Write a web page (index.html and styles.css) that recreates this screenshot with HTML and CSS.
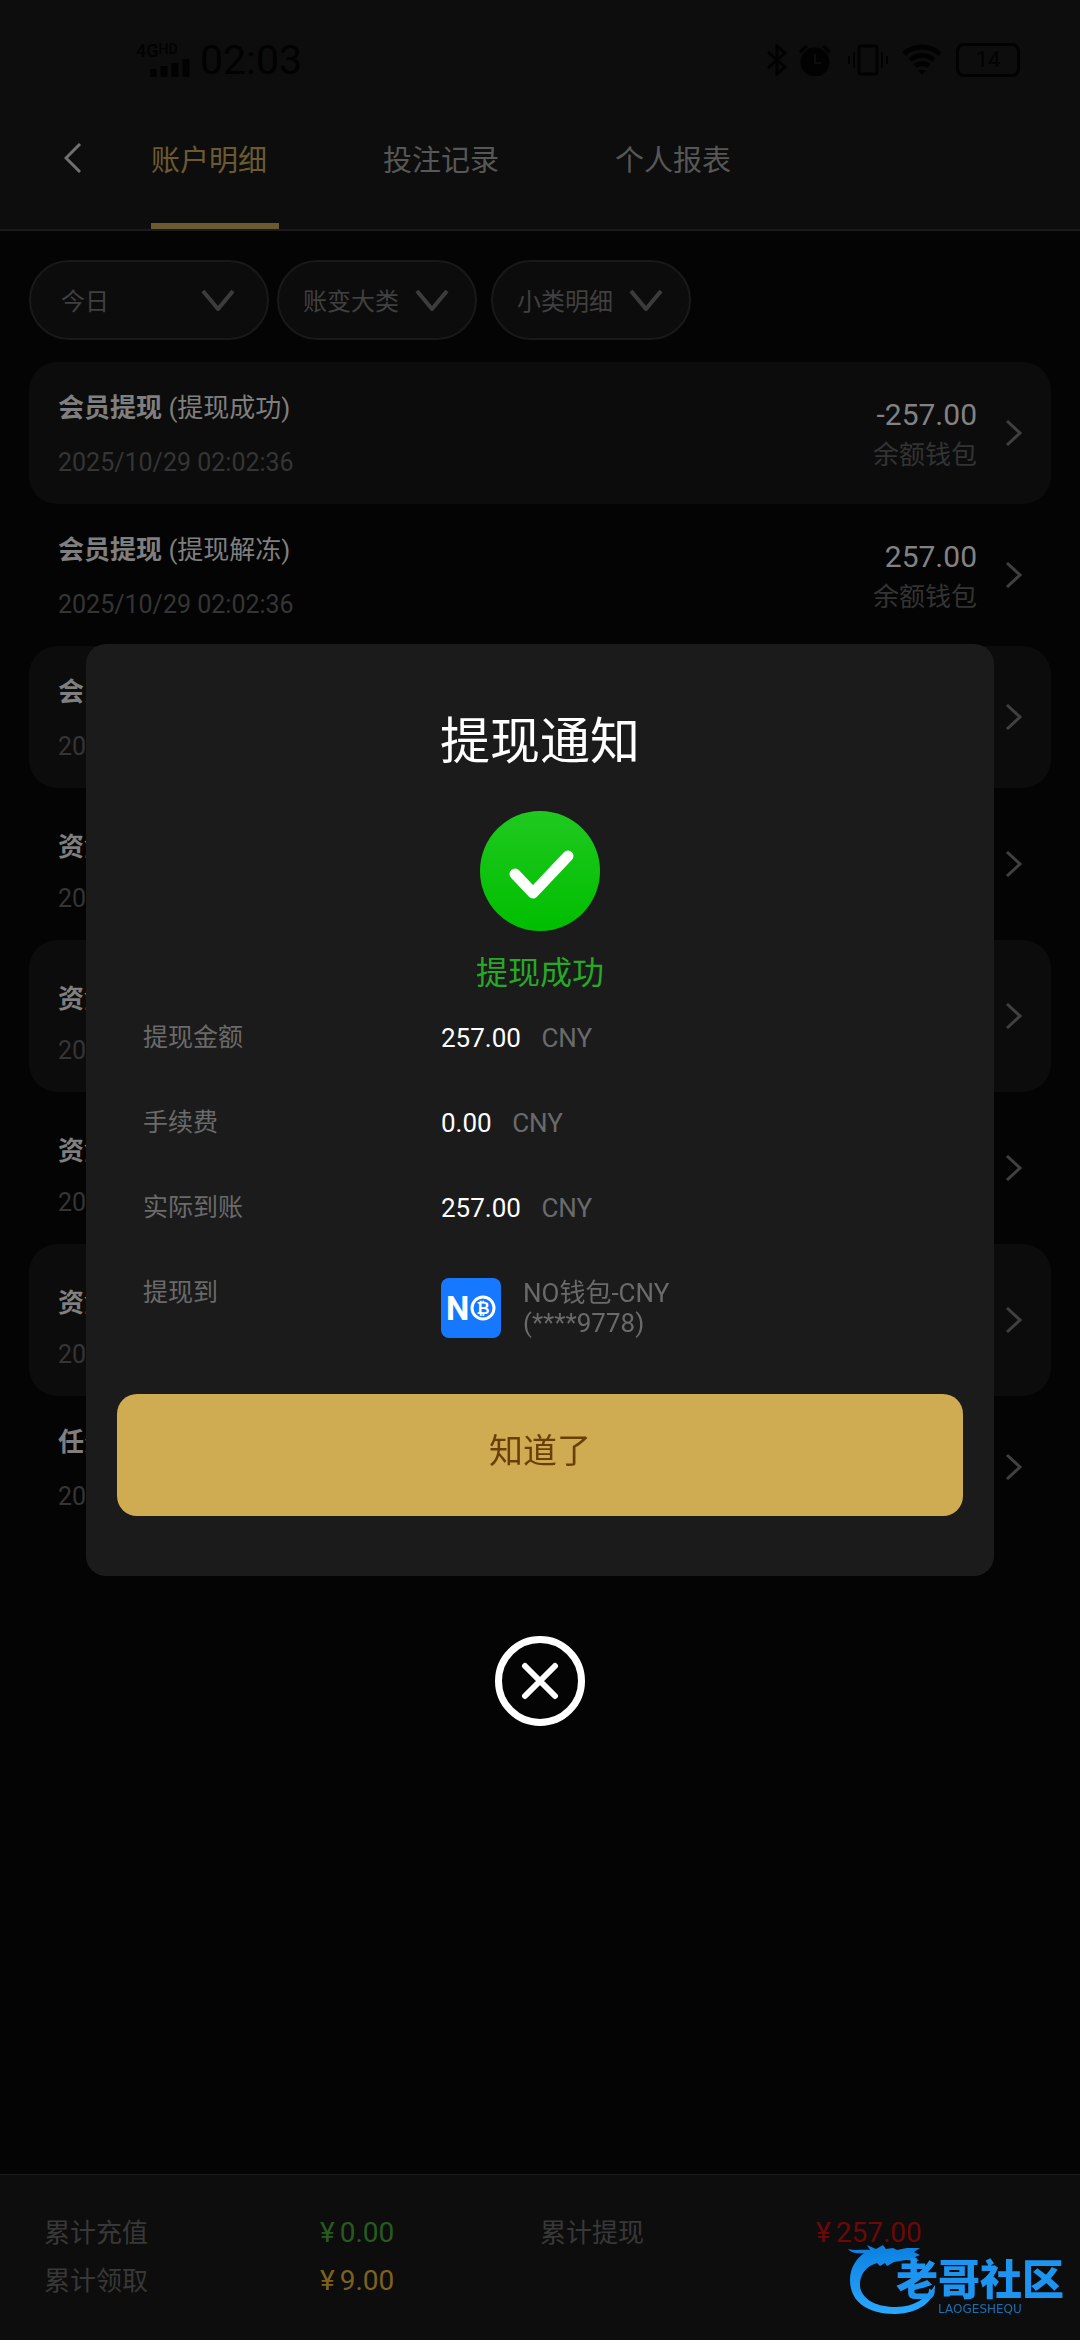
FILE: index.html
```html
<!DOCTYPE html>
<html lang="zh-CN">
<head>
  <meta charset="UTF-8">
  <meta name="viewport" content="width=device-width, initial-scale=1">
  <title>账户明细</title>
  <link rel="stylesheet" href="styles.css">
</head>
<body>

  <div class="page">
    <header class="header">
      <!-- STATUS BAR -->
      <div class="status-bar">
        <div class="signal">
          <span class="network">4G<small>HD</small></span>
          <svg width="40" height="18" viewBox="0 0 40 18">
            <path d="M3 18v-8M14 18v-11M25 18v-14M36 18v-18" stroke="currentColor" stroke-width="7"/>
          </svg>
        </div>
        <span class="time">02:03</span>
        <div class="status-icons">
          <svg width="22" height="32" viewBox="0 0 22 32" fill="none" stroke="currentColor" stroke-width="3">
            <path d="M2 8l17 15-8 7V2l8 7L2 24"/>
          </svg>
          <svg class="alarm" width="32" height="32" viewBox="0 0 32 32" fill="none" stroke="currentColor" stroke-width="3">
            <circle cx="16" cy="18" r="13" fill="currentColor"/>
            <path d="M1 8l7-6M24 2l7 6"/>
            <path d="M16 10v9h6" stroke="#0d0d0d" stroke-width="2"/>
          </svg>
          <svg class="vibrate" width="40" height="32" viewBox="0 0 40 32" fill="none" stroke="currentColor" stroke-width="3">
            <rect x="11" y="2" width="18" height="28" rx="2"/>
            <path d="M6 8v16M1 12v8M34 8v16M39 12v8" stroke-width="2"/>
          </svg>
          <svg class="wifi" width="40" height="32" viewBox="0 0 40 32" fill="none" stroke="currentColor" stroke-width="5">
            <path d="M2 10a27 27 0 0 1 36 0M8 16a18 18 0 0 1 24 0M13 22a11 11 0 0 1 14 0"/>
            <path d="M16 26h8l-4 5z" fill="currentColor" stroke="none"/>
          </svg>
          <span class="battery">14</span>
        </div>
      </div>

      <!-- TABS -->
      <nav class="tabs">
        <button class="back" aria-label="返回">
          <svg width="18" height="30" viewBox="0 0 18 30" fill="none" stroke="currentColor" stroke-width="3">
            <path d="M16 1L2 15l14 14"/>
          </svg>
        </button>
        <a class="tab active" href="#">账户明细</a>
        <a class="tab" href="#">投注记录</a>
        <a class="tab" href="#">个人报表</a>
      </nav>
    </header>

    <!-- FILTERS -->
    <div class="filters">
      <label class="filter filter-date">
        <select aria-label="日期"><option>今日</option></select>
        <svg width="34" height="22" viewBox="0 0 34 22"><path d="M2 2l15 18L32 2"/></svg>
      </label>
      <label class="filter">
        <select aria-label="账变大类"><option>账变大类</option></select>
        <svg width="34" height="22" viewBox="0 0 34 22"><path d="M2 2l15 18L32 2"/></svg>
      </label>
      <label class="filter">
        <select aria-label="小类明细"><option>小类明细</option></select>
        <svg width="34" height="22" viewBox="0 0 34 22"><path d="M2 2l15 18L32 2"/></svg>
      </label>
    </div>

    <!-- RECORDS -->
    <ul class="records">
      <li class="record">
        <div class="info">
          <p class="name"><strong>会员提现</strong> (提现成功)</p>
          <p class="date">2025/10/29 02:02:36</p>
        </div>
        <div class="money">
          <p class="amount">-257.00</p>
          <p class="wallet">余额钱包</p>
        </div>
        <svg class="arrow" width="18" height="28" viewBox="0 0 18 28"><path d="M2 2l13 12L2 26"/></svg>
      </li>
      <li class="record">
        <div class="info">
          <p class="name"><strong>会员提现</strong> (提现解冻)</p>
          <p class="date">2025/10/29 02:02:36</p>
        </div>
        <div class="money">
          <p class="amount">257.00</p>
          <p class="wallet">余额钱包</p>
        </div>
        <svg class="arrow" width="18" height="28" viewBox="0 0 18 28"><path d="M2 2l13 12L2 26"/></svg>
      </li>
      <li class="record">
        <div class="info">
          <p class="name"><strong>会员</strong></p>
          <p class="date">2025</p>
        </div>
        <svg class="arrow" width="18" height="28" viewBox="0 0 18 28"><path d="M2 2l13 12L2 26"/></svg>
      </li>
      <li class="record tall">
        <div class="info">
          <p class="name"><strong>资金</strong></p>
          <p class="date">2025</p>
        </div>
        <svg class="arrow" width="18" height="28" viewBox="0 0 18 28"><path d="M2 2l13 12L2 26"/></svg>
      </li>
      <li class="record tall">
        <div class="info">
          <p class="name"><strong>资金</strong></p>
          <p class="date">2025</p>
        </div>
        <svg class="arrow" width="18" height="28" viewBox="0 0 18 28"><path d="M2 2l13 12L2 26"/></svg>
      </li>
      <li class="record tall">
        <div class="info">
          <p class="name"><strong>资金</strong></p>
          <p class="date">2025</p>
        </div>
        <svg class="arrow" width="18" height="28" viewBox="0 0 18 28"><path d="M2 2l13 12L2 26"/></svg>
      </li>
      <li class="record tall">
        <div class="info">
          <p class="name"><strong>资金</strong></p>
          <p class="date">2025</p>
        </div>
        <svg class="arrow" width="18" height="28" viewBox="0 0 18 28"><path d="M2 2l13 12L2 26"/></svg>
      </li>
      <li class="record">
        <div class="info">
          <p class="name"><strong>任务</strong></p>
          <p class="date">2025</p>
        </div>
        <svg class="arrow" width="18" height="28" viewBox="0 0 18 28"><path d="M2 2l13 12L2 26"/></svg>
      </li>
    </ul>

    <!-- TOTALS -->
    <footer class="totals">
      <div class="total"><span>累计充值</span><span class="green"><i>¥</i>0.00</span></div>
      <div class="total"><span>累计提现</span><span class="red"><i>¥</i>257.00</span></div>
      <div class="total"><span>累计领取</span><span class="yellow"><i>¥</i>9.00</span></div>
    </footer>
  </div>

  <!-- WITHDRAW NOTICE -->
  <div class="overlay">
    <div class="modal" role="dialog" aria-labelledby="modalTitle">
      <h2 id="modalTitle">提现通知</h2>
      <svg class="success-icon" width="120" height="120" viewBox="0 0 120 120">
        <defs>
          <linearGradient id="green" x1="0" y1="0" x2="0" y2="1">
            <stop offset="0" stop-color="#1fc91f"/>
            <stop offset="1" stop-color="#00be00"/>
          </linearGradient>
        </defs>
        <circle cx="60" cy="60" r="60" fill="url(#green)"/>
        <path d="M35 63l18 19 35-37" fill="none" stroke="#fff" stroke-width="11" stroke-linecap="round" stroke-linejoin="round"/>
      </svg>
      <p class="success-text">提现成功</p>

      <dl class="details">
        <dt>提现金额</dt>
        <dd><b>257.00</b> <span>CNY</span></dd>
        <dt>手续费</dt>
        <dd><b>0.00</b> <span>CNY</span></dd>
        <dt>实际到账</dt>
        <dd><b>257.00</b> <span>CNY</span></dd>
        <dt>提现到</dt>
        <dd class="target">
          <svg width="60" height="60" viewBox="0 0 60 60">
            <rect width="60" height="60" rx="8" fill="#1677ff"/>
            <text class="logo-n" x="5" y="42">N</text>
            <circle cx="42" cy="30" r="11" fill="none" stroke="#fff" stroke-width="3"/>
            <text class="logo-b" x="42" y="36">₿</text>
          </svg>
          <span>NO钱包-CNY<br>(****9778)</span>
        </dd>
      </dl>

      <button class="confirm">知道了</button>
    </div>

    <button class="close" aria-label="关闭">
      <svg width="38" height="38" viewBox="0 0 38 38" fill="none" stroke="currentColor" stroke-width="6" stroke-linecap="round">
        <path d="M4 4l30 30M34 4L4 34"/>
      </svg>
    </button>
  </div>

  <!-- WATERMARK -->
  <div class="watermark">
    <svg class="dragon" width="92" height="72" viewBox="0 0 92 72">
      <defs>
        <linearGradient id="blue" x1="0" y1="0" x2="0" y2="1">
          <stop offset="0" stop-color="#0b7fe0"/>
          <stop offset="1" stop-color="#2aa9ff"/>
        </linearGradient>
      </defs>
      <path fill="url(#blue)" d="M0 5c8 2 15 0 22 1l-3-5 9 4 7-4 3 4 7-1 4 2 10-2 13 0-6 4 6 3-5 2 4 4-13-1-6 1-6 1-7 4-2-3-5 3-3-3C18 22 11 31 12 43c3 14 18 20 36 20 18 0 31-9 39-22 1 15-16 29-40 29C20 70 2 58 2 36 2 24 8 15 16 9 10 10 3 9 0 5z"/>
    </svg>
    <div class="brand">
      <span class="brand-name">老哥社区</span>
      <span class="brand-sub">LAOGESHEQU</span>
    </div>
  </div>

</body>
</html>
```

FILE: styles.css
```css
* {
  box-sizing: border-box;
}

body {
  font-family: Roboto, "Noto Sans CJK SC", sans-serif;
  font-size: 26px;
  background: #040404;
  color: #575757;
  margin: 0;
}

p, h2, ul, dl, dd {
  margin: 0;
  padding: 0;
}

button {
  font-family: inherit;
  border: none;
  padding: 0;
  cursor: pointer;
}

svg {
  display: block;
  flex: none;
}

.page {
  min-height: 100vh;
  display: flex;
  flex-direction: column;
}

.header {
  background: #0d0d0d;
  border-bottom: 2px solid #1b1b1b;
}

/* status bar */
.status-bar {
  display: flex;
  align-items: center;
  height: 86px;
  padding: 34px 60px 0 136px;
  color: #020202;
}

.signal {
  width: 54px;
}

.signal svg {
  margin-left: 14px;
}

.network {
  display: block;
  font-size: 18px;
  font-weight: 500;
  line-height: 16px;
}

.network small {
  font-size: 14px;
  vertical-align: 3px;
  line-height: 0;
}

.time {
  font-size: 41px;
  margin-left: 10px;
}

.status-icons {
  display: flex;
  align-items: center;
  margin-left: auto;
}

.alarm {
  margin-left: 11px;
}

.vibrate {
  margin-left: 17px;
}

.wifi {
  margin-left: 14px;
}

.battery {
  width: 64px;
  height: 34px;
  margin-left: 14px;
  border: 3px solid #020202;
  border-radius: 8px;
  font-size: 22px;
  line-height: 28px;
  text-align: center;
}

/* tabs */
.tabs {
  display: flex;
  gap: 104px;
  height: 143px;
}

.back {
  width: 48px;
  padding-left: 32px;
  margin: 0 -33px 0 32px;
  background: none;
  color: #707070;
}

.tab {
  width: 128px;
  border-bottom: 6px solid transparent;
  font-size: 29px;
  line-height: 150px;
  height: 143px;
  color: #575757;
  text-decoration: none;
}

.tab.active {
  color: #6b5a30;
  border-color: #6b5a30;
}

/* filters */
.filters {
  display: flex;
  gap: 14px;
  padding: 29px 29px 22px;
}

.filter {
  display: grid;
  align-items: center;
  width: 200px;
}

.filter-date {
  width: 240px;
  margin-right: -6px;
}

.filter select,
.filter svg {
  grid-area: 1 / 1;
}

.filter select {
  appearance: none;
  width: 100%;
  height: 80px;
  padding: 4px 24px 0;
  border: 2px solid #191919;
  border-radius: 40px;
  background: #0c0c0c;
  color: #404040;
  font-family: inherit;
  font-size: 24px;
}

.filter svg {
  justify-self: end;
  margin-right: 28px;
  fill: none;
  stroke: #3c3c3c;
  stroke-width: 4;
  pointer-events: none;
}

.filter-date select {
  padding-left: 30px;
}

.filter-date svg {
  margin-right: 34px;
}

/* records */
.records {
  list-style: none;
  padding: 0 29px;
  flex: 1;
}

.record {
  display: flex;
  align-items: center;
  height: 142px;
  padding: 0 28px 0 29px;
  border-radius: 28px;
}

.record:nth-child(odd) {
  background: #0c0c0c;
}

.record.tall {
  height: 152px;
}

.record.tall .info {
  gap: 16px;
  padding-top: 18px;
}

.info {
  display: flex;
  flex-direction: column;
  gap: 19px;
  flex: 1;
  padding-top: 4px;
  line-height: 36px;
}

.name {
  color: #7f7f7f;
}

.date {
  font-size: 25px;
  color: #353535;
}

.money {
  padding-top: 4px;
  text-align: right;
  line-height: 40px;
}

.amount {
  font-size: 30px;
  color: #828282;
}

.wallet {
  color: #333;
}

.arrow {
  margin-left: 28px;
  fill: none;
  stroke: #404040;
  stroke-width: 3;
}

/* totals */
.totals {
  display: grid;
  grid-template-columns: 1fr 1fr;
  padding: 34px 44px 35px;
  border-top: 1px solid #1b1b1b;
  background: #0d0d0d;
  line-height: 48px;
  color: #383838;
}

.total {
  display: flex;
}

.total span {
  flex: 1;
}

.total span:first-child {
  flex: none;
  width: 276px;
}

.total i {
  font-style: normal;
  margin-right: 5px;
}

.total .green,
.total .red,
.total .yellow {
  font-size: 28px;
}

.green {
  color: #285a20;
}

.red {
  color: #6b080c;
}

.yellow {
  color: #7d611f;
}

/* notice */
.overlay {
  position: fixed;
  inset: 0;
  display: flex;
  flex-direction: column;
  align-items: center;
  justify-content: center;
  gap: 60px;
  padding: 30px 86px 0;
}

.modal {
  width: 100%;
  display: flex;
  flex-direction: column;
  align-items: center;
  padding: 68px 31px 60px;
  border-radius: 20px;
  background: #1b1b1b;
}

.modal h2 {
  font-size: 50px;
  font-weight: 400;
  line-height: 60px;
  color: #fff;
}

.success-icon {
  margin-top: 39px;
}

.success-text {
  margin-top: 22px;
  font-size: 32px;
  line-height: 40px;
  color: #27a827;
}

.details {
  display: grid;
  grid-template-columns: 298px 1fr;
  row-gap: 55px;
  width: 100%;
  margin-top: 30px;
  padding: 0 26px;
  line-height: 30px;
  color: #6a6a6a;
}

.details dt {
  font-size: 25px;
}

.details b {
  margin-right: 14px;
  font-weight: 400;
  color: #fff;
}

.target {
  display: flex;
  gap: 22px;
}

.logo-n {
  font-size: 33px;
  font-weight: 700;
  fill: #fff;
}

.logo-b {
  font-family: "DejaVu Sans", sans-serif;
  font-size: 16px;
  font-weight: bold;
  text-anchor: middle;
  fill: #fff;
}

.confirm {
  width: 100%;
  height: 122px;
  margin-top: 56px;
  padding-bottom: 14px;
  border-radius: 20px;
  background: #cfac52;
  color: #6b3e08;
  font-size: 34px;
}

.close {
  display: grid;
  place-items: center;
  width: 90px;
  height: 90px;
  border: 7px solid #fff;
  border-radius: 50%;
  background: none;
  color: #fff;
}

/* watermark */
.watermark {
  position: fixed;
  right: 16px;
  bottom: 24px;
  display: flex;
  align-items: flex-end;
}

.dragon {
  margin-right: -44px;
}

.brand {
  display: flex;
  flex-direction: column;
  align-items: center;
}

.brand-name {
  font-size: 42px;
  font-weight: 900;
  line-height: 42px;
  color: #1d94f0;
}

.brand-sub {
  font-family: "DejaVu Sans", sans-serif;
  font-size: 12px;
  line-height: 14px;
  color: #1a6fae;
}
```
